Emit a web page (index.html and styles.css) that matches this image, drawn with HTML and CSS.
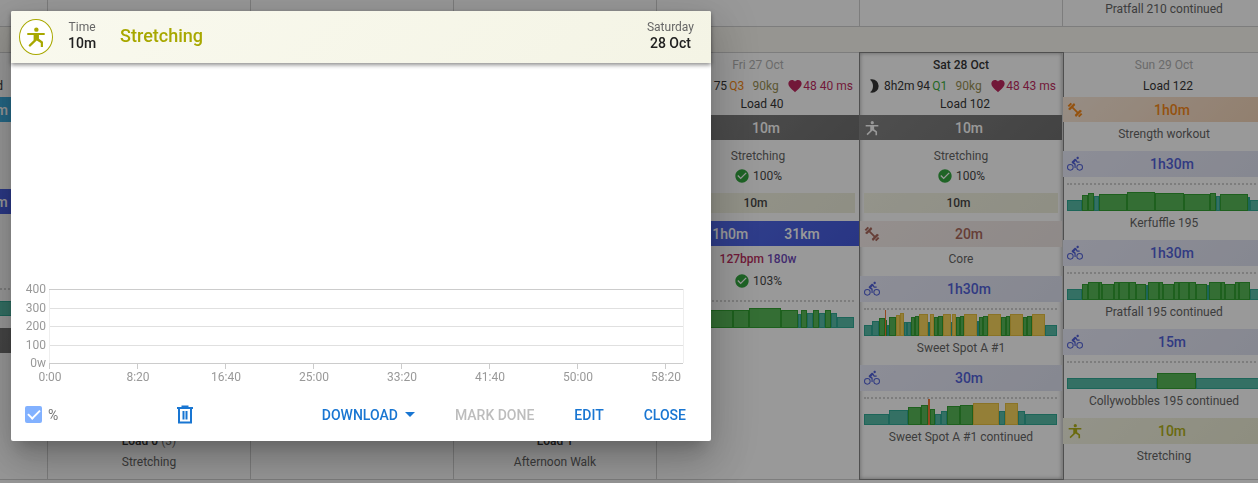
FILE: index.html
```
<!DOCTYPE html>
<html lang="en">
<head>
    <meta charset="UTF-8">
    <meta name="viewport" content="width=device-width, initial-scale=1.0">
    <title>Training Calendar</title>
    <link rel="stylesheet" href="styles.css">
</head>
<body>
    <svg class="icon-defs" aria-hidden="true">
        <symbol id="bike" viewBox="0 0 24 24"><path d="M5,20.5A3.5,3.5 0 0,1 1.5,17A3.5,3.5 0 0,1 5,13.5A3.5,3.5 0 0,1 8.5,17A3.5,3.5 0 0,1 5,20.5M5,12A5,5 0 0,0 0,17A5,5 0 0,0 5,22A5,5 0 0,0 10,17A5,5 0 0,0 5,12M14.8,10H19V8.2H15.8L13.86,4.93C13.57,4.43 13,4.1 12.4,4.1C11.93,4.1 11.5,4.29 11.2,4.6L7.5,8.29C7.19,8.6 7,9 7,9.5C7,10.13 7.33,10.66 7.85,10.97L11.2,13V18H13V11.5L10.75,9.85L13.07,7.5M19,20.5A3.5,3.5 0 0,1 15.5,17A3.5,3.5 0 0,1 19,13.5A3.5,3.5 0 0,1 22.5,17A3.5,3.5 0 0,1 19,20.5M19,12A5,5 0 0,0 14,17A5,5 0 0,0 19,22A5,5 0 0,0 24,17A5,5 0 0,0 19,12M16,4.8C17,4.8 17.8,4 17.8,3C17.8,2 17,1.2 16,1.2C15,1.2 14.2,2 14.2,3C14.2,4 15,4.8 16,4.8Z"/></symbol>
        <symbol id="stretch" viewBox="0 0 24 24"><circle cx="12.4" cy="4" r="2.4"/><path d="M2.5 7.5H21.5V9.7H15.2V14L19.6 17.2V23H17.2V18.5L12.8 15.7L5.4 22.8L3.8 21.1L9.4 15.6V9.7H2.5Z"/></symbol>
        <symbol id="weights" viewBox="0 0 24 24"><path d="M7 7L17 17" stroke="currentColor" stroke-width="2.6"/><path d="M1.5 10.5L10.5 1.5L12.5 4.5L4.5 12.5ZM22.5 13.5L13.5 22.5L11.5 19.5L19.5 11.5Z"/><path d="M2 6.5L6.5 2M22 17.5L17.5 22" stroke="currentColor" stroke-width="3"/></symbol>
        <symbol id="check" viewBox="0 0 24 24"><path d="M12 2C6.5 2 2 6.5 2 12S6.5 22 12 22 22 17.5 22 12 17.5 2 12 2M10 17L5 12L6.41 10.59L10 14.17L17.59 6.58L19 8L10 17Z"/></symbol>
        <symbol id="heart" viewBox="0 0 24 24"><path d="M12,21.35L10.55,20.03C5.4,15.36 2,12.27 2,8.5C2,5.41 4.42,3 7.5,3C9.24,3 10.91,3.81 12,5.08C13.09,3.81 14.76,3 16.5,3C19.58,3 22,5.41 22,8.5C22,12.27 18.6,15.36 13.45,20.03L12,21.35Z"/></symbol>
        <symbol id="moon" viewBox="0 0 24 24"><path d="M9 2C7.95 2 6.95 2.16 6 2.46C8.9 4.5 10.5 8 10.5 12S8.9 19.5 6 21.54C6.95 21.84 7.95 22 9 22A10 10 0 0 0 9 2Z"/></symbol>
    </svg>

    <main class="calendar">
        <section class="week week-prev">
            <div class="day"></div>
            <div class="day"></div>
            <div class="day"></div>
            <div class="day"></div>
            <div class="day"></div>
            <div class="day"></div>
            <div class="day"><p class="name">Pratfall 210 continued</p></div>
        </section>
        <div class="week-band"></div>
        <section class="week">
            <div class="day">
                <h3 class="date">Mon 23 Oct</h3>
                <div class="load">Load 60, well rested</div>
                <article class="done">
                    <header class="bar solid swim"><svg class="icon"></svg><div class="totals"><span>45m</span><span>1500m</span></div></header>
                    <p>Swim</p>
                    <p class="match last">100%</p>
                </article>
                <article class="done">
                    <header class="bar solid ride"><svg class="icon"><use href="#bike"/></svg><div class="totals"><span>1h0m</span><span>31km</span></div></header>
                    <p class="averages"><b class="bpm">119bpm</b> <b class="watts">150w</b></p>
                    <p>Ride</p>
                    <p class="match">100%</p>
                    <div class="chart" data-steps="20:11:a 130:17:b 43:15:a"></div>
                </article>
                <article class="done">
                    <header class="bar solid other"><svg class="icon"><use href="#stretch"/></svg><div class="totals"><span>10m</span></div></header>
                </article>
            </div>
            <div class="day day-end">
                <div class="load strong">Load 0 <small>(3)</small></div>
                <p class="name">Stretching</p>
            </div>
            <div class="day"></div>
            <div class="day day-end">
                <div class="load strong">Load 1</div>
                <p class="name">Afternoon Walk</p>
            </div>
            <div class="day">
                <h3 class="date">Fri 27 Oct</h3>
                <div class="wellness">
                    <span class="sleep"><svg class="icon"><use href="#moon"/></svg>7h5m <span>75</span> <span class="q3">Q3</span></span>
                    <span class="weight">90kg</span>
                    <span class="pulse"><svg class="icon"><use href="#heart"/></svg>48 <span>40 ms</span></span>
                </div>
                <div class="load">Load 40</div>
                <article class="done">
                    <header class="bar solid other"><svg class="icon"><use href="#stretch"/></svg><div class="totals"><span>10m</span></div></header>
                    <p>Stretching</p>
                    <p class="match"><svg class="icon"><use href="#check"/></svg>100%</p>
                    <div class="planned">10m</div>
                </article>
                <article class="done">
                    <header class="bar solid ride"><svg class="icon"><use href="#bike"/></svg><div class="totals"><span>1h0m</span><span>31km</span></div></header>
                    <p class="averages"><b class="bpm">127bpm</b> <b class="watts">180w</b></p>
                    <p class="match"><svg class="icon"><use href="#check"/></svg>103%</p>
                    <div class="chart" data-steps="40:10:a 32:18:b 16:18:b 32:20:b 17:18:b 3:14:a 6:18:b 6:15:a 6:18:b 6:15:a 6:18:b 6:15:a 17:11:a"></div>
                </article>
            </div>
            <div class="day today">
                <h3 class="date">Sat 28 Oct</h3>
                <div class="wellness">
                    <span class="sleep"><svg class="icon"><use href="#moon"/></svg>8h2m <span>94</span> <span class="q1">Q1</span></span>
                    <span class="weight">90kg</span>
                    <span class="pulse"><svg class="icon"><use href="#heart"/></svg>48 <span>43 ms</span></span>
                </div>
                <div class="load">Load 102</div>
                <article class="done">
                    <header class="bar solid other"><svg class="icon"><use href="#stretch"/></svg><div class="totals"><span>10m</span></div></header>
                    <p>Stretching</p>
                    <p class="match"><svg class="icon"><use href="#check"/></svg>100%</p>
                    <div class="planned">10m</div>
                </article>
                <article>
                    <header class="bar core"><svg class="icon"><use href="#weights"/></svg><div class="totals"><span>20m</span></div></header>
                    <p class="name">Core</p>
                </article>
                <article>
                    <header class="bar bike"><svg class="icon"><use href="#bike"/></svg><div class="totals"><span>1h30m</span></div></header>
                    <div class="chart" data-steps="8:11:a 7:15:a 6:18:b 1:26:d 1:16:b 2:11:a 7:19:b 4:21:c 4:23:c 3:14:a 3:14:a 4:19:b 4:20:b 9:22:c 2:14:a 4:22:c 4:19:b 5:20:b 8:22:c 1:14:a 4:22:c 4:19:b 4:20:b 13:22:c 2:15:a 4:19:b 5:20:b 13:22:c 4:19:b 4:20:b 13:22:c 4:19:b 5:20:b 13:22:c 12:11:a"></div>
                    <p class="name">Sweet Spot A #1</p>
                </article>
                <article>
                    <header class="bar bike"><svg class="icon"><use href="#bike"/></svg><div class="totals"><span>30m</span></div></header>
                    <div class="chart" data-steps="25:11:a 19:15:a 13:18:b 7:20:b 2:26:d 5:16:b 6:11:a 6:14:a 13:19:b 13:20:b 26:22:c 6:14:a 13:22:c 7:14:a 32:11:a"></div>
                    <p class="name">Sweet Spot A #1 continued</p>
                </article>
            </div>
            <div class="day">
                <h3 class="date">Sun 29 Oct</h3>
                <div class="load">Load 122</div>
                <article>
                    <header class="bar strength"><svg class="icon"><use href="#weights"/></svg><div class="totals"><span>1h0m</span></div></header>
                    <p class="name">Strength workout</p>
                </article>
                <article>
                    <header class="bar bike"><svg class="icon"><use href="#bike"/></svg><div class="totals"><span>1h30m</span></div></header>
                    <div class="chart" data-steps="15:11:a 6:16:b 6:18:b 5:15:a 28:17:b 28:19:b 28:18:b 26:17:b 6:18:b 4:15:a 28:17:b 2:14:a 10:11:a"></div>
                    <p class="name">Kerfuffle 195</p>
                </article>
                <article>
                    <header class="bar bike"><svg class="icon"><use href="#bike"/></svg><div class="totals"><span>1h30m</span></div></header>
                    <div class="chart" data-steps="15:11:a 6:16:b 11:18:b 3:18:b 12:16:b 4:18:b 10:18:b 7:18:b 10:16:b 2:15:a 11:18:b 4:18:b 11:16:b 5:18:b 10:18:b 7:18:b 11:16:b 2:15:a 11:18:b 4:18:b 10:16:b 4:18:b 11:18:b 10:11:a"></div>
                    <p class="name">Pratfall 195 continued</p>
                </article>
                <article>
                    <header class="bar bike"><svg class="icon"><use href="#bike"/></svg><div class="totals"><span>15m</span></div></header>
                    <div class="chart" data-steps="90:11:a 39:16:b 64:11:a"></div>
                    <p class="name">Collywobbles 195 continued</p>
                </article>
                <article>
                    <header class="bar yoga"><svg class="icon"><use href="#stretch"/></svg><div class="totals"><span>10m</span></div></header>
                    <p class="name">Stretching</p>
                </article>
            </div>
        </section>
    </main>

    <div class="overlay"></div>

    <div class="dialog" role="dialog" aria-labelledby="dialogTitle">
        <header class="dialog-header">
            <span class="avatar"><svg class="icon"><use href="#stretch"/></svg></span>
            <div class="fact"><span>Time</span><b>10m</b></div>
            <h2 id="dialogTitle">Stretching</h2>
            <div class="fact fact-date"><span>Saturday</span><b>28 Oct</b></div>
        </header>
        <div class="dialog-body">
            <svg class="power-chart" viewBox="0 0 700 110">
                <path class="grid" d="M39 28.5H672M39 46.5H672M39 65.5H672"/>
                <path class="side" d="M38.5 9V83M672.5 9V83"/>
                <path class="axis" d="M38 9.5H672M38 83.5H672M38.5 83V89M126.5 83V89M214.5 83V89M302.5 83V89M390.5 83V89M478.5 83V89M566.5 83V89M654.5 83V89"/>
                <g text-anchor="end">
                    <text x="35" y="13">400</text>
                    <text x="35" y="32">300</text>
                    <text x="35" y="50">200</text>
                    <text x="35" y="69">100</text>
                    <text x="35" y="87">0w</text>
                </g>
                <g text-anchor="middle">
                    <text x="39" y="101">0:00</text>
                    <text x="127" y="101">8:20</text>
                    <text x="215" y="101">16:40</text>
                    <text x="303" y="101">25:00</text>
                    <text x="391" y="101">33:20</text>
                    <text x="479" y="101">41:40</text>
                    <text x="567" y="101">50:00</text>
                    <text x="655" y="101">58:20</text>
                </g>
            </svg>
        </div>
        <footer class="dialog-actions">
            <label class="percent"><input type="checkbox" checked>%</label>
            <button class="trash" type="button" aria-label="Delete">
                <svg viewBox="0 0 18 20"><path d="M1 3H17M5.5 1.5H12.5M3 3V17.5H15V3M7.5 6V14.5M10.5 6V14.5"/></svg>
            </button>
            <div class="buttons">
                <button type="button">DOWNLOAD<span class="caret"></span></button>
                <button type="button" disabled>MARK DONE</button>
                <button type="button">EDIT</button>
                <button type="button">CLOSE</button>
            </div>
        </footer>
    </div>
    <script src="charts.js"></script>
</body>
</html>
```
FILE: styles.css
```
* {
    margin: 0;
    padding: 0;
    box-sizing: border-box;
}
body {
    font-family: Roboto, sans-serif;
    font-size: 12px;
    color: #212121;
    background: #fff;
    overflow: hidden;
}
.icon-defs {
    position: absolute;
    width: 0;
    height: 0;
}
.icon {
    width: 16px;
    height: 16px;
    fill: currentColor;
    flex: none;
}

/* Calendar */
.calendar {
    margin: 0 -8px 0 -155px;
}
.week {
    display: grid;
    grid-template-columns: repeat(7, 1fr);
    min-height: 427px;
    border-bottom: 1px solid #ccc;
}
.week-prev {
    min-height: 27px;
}
.week-band {
    height: 26px;
    background: #faf8f0;
    border-bottom: 1px solid #ccc;
}
.day {
    display: flex;
    flex-direction: column;
    border-right: 1px solid #ccc;
    text-align: center;
}
.week-prev .name {
    line-height: 18px;
}
.day-end {
    justify-content: flex-end;
    padding-bottom: 5px;
}
.today {
    outline: 1px solid #777;
    box-shadow: inset 0 0 4px rgba(0, 0, 0, 0.4);
}
.date {
    font-size: 12px;
    font-weight: 400;
    line-height: 24px;
    color: #aaa;
}
.today .date {
    font-weight: 500;
    color: #212121;
}
.wellness {
    display: flex;
    justify-content: space-between;
    align-items: center;
    height: 18px;
    padding: 0 6px;
    white-space: nowrap;
}
.wellness span {
    display: flex;
    align-items: center;
    gap: 2px;
}
.wellness .pulse {
    gap: 0;
    color: #b8124f;
}
.wellness .pulse span {
    margin-left: 3px;
}
.wellness .q1 { color: #28a428; }
.wellness .q3 { color: #f57c00; }
.weight { color: #8d8443; }
.load {
    line-height: 18px;
    padding: 0 0 2px 8px;
}
.load.strong {
    padding: 0;
    font-weight: 500;
}
.load small {
    font-size: 12px;
    font-weight: 400;
    color: #666;
}
.name,
.done p {
    color: #555;
}
.name {
    line-height: 24px;
}
article {
    padding-bottom: 5px;
}
.bar {
    display: flex;
    align-items: center;
    height: 26px;
    padding: 0 4px;
    font-size: 14px;
    font-weight: 500;
}
.totals {
    flex: 1;
    display: flex;
    justify-content: center;
    gap: 36px;
}
.bar.solid {
    height: 25px;
    margin-bottom: 6px;
    color: #fff;
}
.bar.strength {
    height: 25px;
}
.other { background: linear-gradient(135deg, #777, #606060); }
.ride { background: linear-gradient(135deg, #4460ec, #3048d8); }
.swim { background: #2aa5dc; }
.bike { background: linear-gradient(135deg, #e8eafa, #dcdff0); color: #3f51d5; }
.core { background: linear-gradient(135deg, #f6ecea, #ece3e0); color: #a1584a; }
.strength { background: linear-gradient(135deg, #fbe9d8, #f2cfb0); color: #f57c00; }
.yoga { background: linear-gradient(135deg, #f5f5e2, #eaeacf); color: #a8a800; }
.done {
    padding-bottom: 8px;
}
.done p {
    line-height: 20px;
}
.done .match {
    display: flex;
    align-items: center;
    justify-content: center;
    gap: 3px;
    color: #333;
}
.done .last {
    margin-bottom: 13px;
}
.match .icon {
    color: #1f9d2c;
}
.done .averages {
    margin: -3px 0 2px;
}
.averages b {
    font-weight: 500;
}
.bpm { color: #b3164f; }
.watts { color: #5e35b1; }
.planned {
    margin: 7px 4px 0;
    padding-right: 5px;
    line-height: 20px;
    font-weight: 500;
    color: #333;
    background: linear-gradient(135deg, #f5f5e4, #ececd8);
}
.chart {
    display: flex;
    align-items: flex-end;
    height: 28px;
    margin: 6px 5px 0 4px;
    border-top: 2px dotted #ccc;
}
.done .chart {
    margin-top: 9px;
    margin-bottom: 4px;
}
.step {
    box-shadow: inset 0 0 0 1px;
}
.step-a { background: #45b39d; color: #1aa08a; }
.step-b { background: #45b045; color: #1c961c; }
.step-c { background: #f5cf4a; color: #e3b92c; }
.step-d { background: #f4691e; color: #f4691e; }

.overlay {
    position: fixed;
    inset: 0;
    background: rgba(33, 33, 33, 0.46);
}

/* Workout dialog */
.dialog {
    position: fixed;
    top: 11px;
    left: 11px;
    width: 700px;
    max-width: calc(100% - 22px);
    background: #fff;
    border-radius: 2px;
    box-shadow: 0 11px 15px -7px rgba(0, 0, 0, 0.2), 0 24px 38px 3px rgba(0, 0, 0, 0.14), 0 9px 46px 8px rgba(0, 0, 0, 0.12);
}
.dialog-header {
    display: flex;
    align-items: center;
    height: 52px;
    padding: 0 17px 0 8px;
    background: linear-gradient(135deg, #f9f9ee, #f4f4e5);
    border-radius: 2px 2px 0 0;
    box-shadow: 0 2px 4px rgba(0, 0, 0, 0.45);
}
.avatar {
    display: flex;
    align-items: center;
    justify-content: center;
    width: 34px;
    height: 36px;
    border: 1px solid #a8a800;
    border-radius: 50%;
    background: #fff;
    color: #a8a800;
}
.avatar .icon {
    width: 22px;
    height: 22px;
}
.fact {
    display: flex;
    flex-direction: column;
    margin-left: 15px;
    padding-bottom: 4px;
    line-height: 16px;
    text-align: center;
    color: #666;
}
.fact b {
    font-size: 14px;
    font-weight: 500;
    color: #212121;
}
.fact-date {
    margin-left: auto;
}
.dialog h2 {
    margin-left: 24px;
    padding-bottom: 4px;
    font-size: 18px;
    font-weight: 500;
    color: #a8a800;
}
.dialog-body {
    padding-top: 217px;
}
.power-chart {
    display: block;
    width: 100%;
}
.power-chart path {
    fill: none;
}
.power-chart text {
    font-size: 12px;
    fill: #999;
}
.grid { stroke: #e0e0e0; }
.side { stroke: #eee; }
.axis { stroke: #ccc; }
.dialog-actions {
    display: flex;
    align-items: center;
    height: 51px;
    padding: 0 9px 2px 14px;
}
.percent {
    display: flex;
    align-items: center;
    gap: 6px;
    width: 143px;
    font-size: 14px;
    color: #757575;
}
.percent input {
    appearance: none;
    display: grid;
    place-items: center;
    width: 17px;
    height: 17px;
    border-radius: 2px;
    background: #82b1ff;
}
.percent input::after {
    content: "";
    width: 10px;
    height: 5px;
    border: solid #fff;
    border-width: 0 0 2px 2px;
    transform: rotate(-45deg) translate(1px, -1px);
}
button {
    border: none;
    background: none;
    font-family: inherit;
    font-size: 14px;
    font-weight: 500;
    color: #1976d2;
    cursor: pointer;
}
button:disabled {
    color: #bdbdbd;
    cursor: default;
}
.trash {
    padding: 8px;
}
.trash svg {
    display: block;
    width: 18px;
    height: 20px;
    fill: none;
    stroke: currentColor;
    stroke-width: 2;
}
.buttons {
    display: flex;
    gap: 8px;
    margin-left: auto;
}
.buttons button {
    display: flex;
    align-items: center;
    padding: 0 16px;
    height: 36px;
}
.caret {
    margin-left: 7px;
    border: 5px solid transparent;
    border-top-color: currentColor;
    border-bottom: 0;
}
```
FILE: charts.js
```
// Each step is width:height:zone
document.querySelectorAll('.chart').forEach(chart => {
    chart.dataset.steps.split(' ').forEach(step => {
        const [width, height, zone] = step.split(':');
        const bar = document.createElement('div');
        bar.className = `step step-${zone}`;
        bar.style.flex = `${width} 1 0`;
        bar.style.height = `${height}px`;
        chart.appendChild(bar);
    });
});
```
